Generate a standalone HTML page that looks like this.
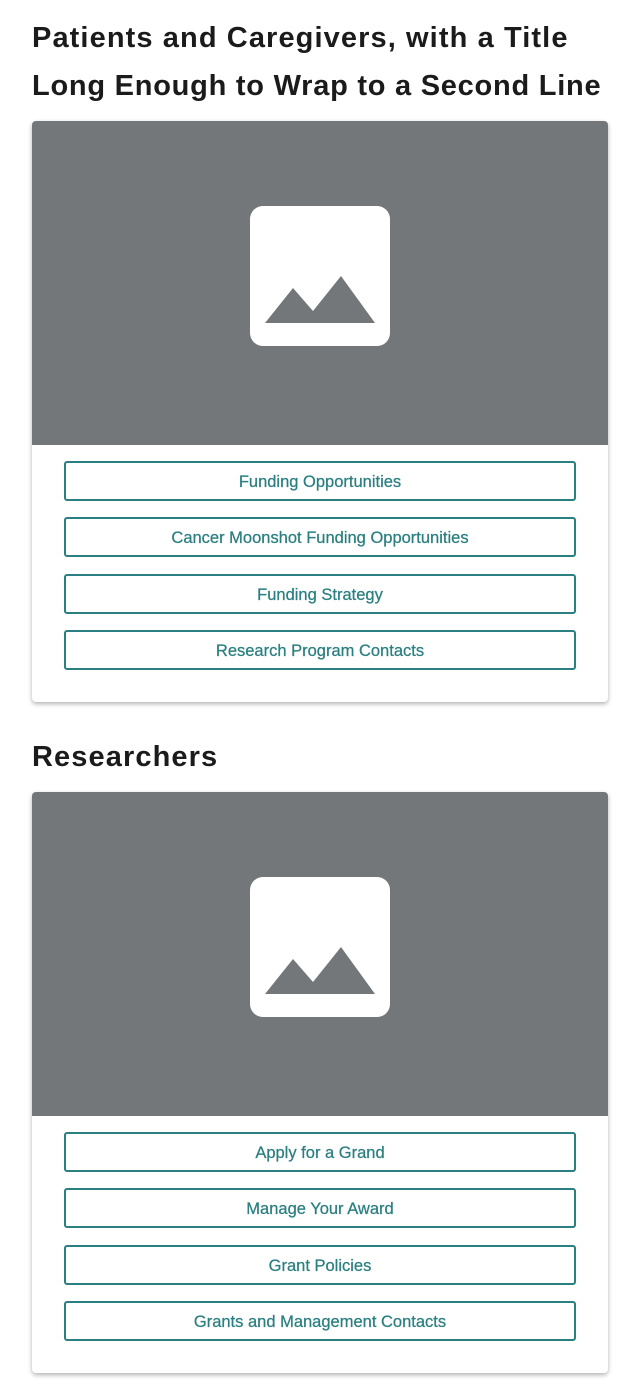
<!DOCTYPE html>
<html><head><meta charset="utf-8"><style>
*{box-sizing:border-box;margin:0;padding:0}
body{width:640px;height:1389px;background:#fff;font-family:"Liberation Sans",sans-serif;position:relative;overflow:hidden}
h2{position:absolute;left:32px;font-size:29px;letter-spacing:1.1px;font-weight:bold;color:#1b1b1b;line-height:48px;white-space:nowrap}
.card{position:absolute;left:32px;width:576px;background:#fff;border-radius:4px;box-shadow:0 2px 5px rgba(0,0,0,.3);overflow:hidden}
.img{height:324px;background:#73777a;position:relative}
.img svg{position:absolute;left:218px;top:85px}
.btns{padding:16px 32px 32px}
.btn{height:40px;border:2px solid #2a7f80;border-radius:3px;color:#2a7f80;font-size:16.5px;text-align:center;line-height:39px;margin-bottom:16.3px;-webkit-text-stroke:0.25px #2a7f80}
.btn:last-child{margin-bottom:0}
</style></head><body>
<h2 style="top:14px">Patients and Caregivers, with a Title<br><span style="letter-spacing:0.75px">Long Enough to Wrap to a Second Line</span></h2>
<div class="card" style="top:121px;height:581px">
<div class="img"><svg width="140" height="140" viewBox="0 0 140 140"><rect width="140" height="140" rx="13" fill="#fff"/><path d="M15 117 L43 82 L63 105 L91 70 L125 117 Z" fill="#73777a"/></svg></div>
<div class="btns">
<div class="btn">Funding Opportunities</div>
<div class="btn">Cancer Moonshot Funding Opportunities</div>
<div class="btn">Funding Strategy</div>
<div class="btn">Research Program Contacts</div>
</div></div>
<h2 style="top:733px">Researchers</h2>
<div class="card" style="top:792px;height:581px">
<div class="img"><svg width="140" height="140" viewBox="0 0 140 140"><rect width="140" height="140" rx="13" fill="#fff"/><path d="M15 117 L43 82 L63 105 L91 70 L125 117 Z" fill="#73777a"/></svg></div>
<div class="btns">
<div class="btn">Apply for a Grand</div>
<div class="btn">Manage Your Award</div>
<div class="btn">Grant Policies</div>
<div class="btn">Grants and Management Contacts</div>
</div></div>
</body></html>
